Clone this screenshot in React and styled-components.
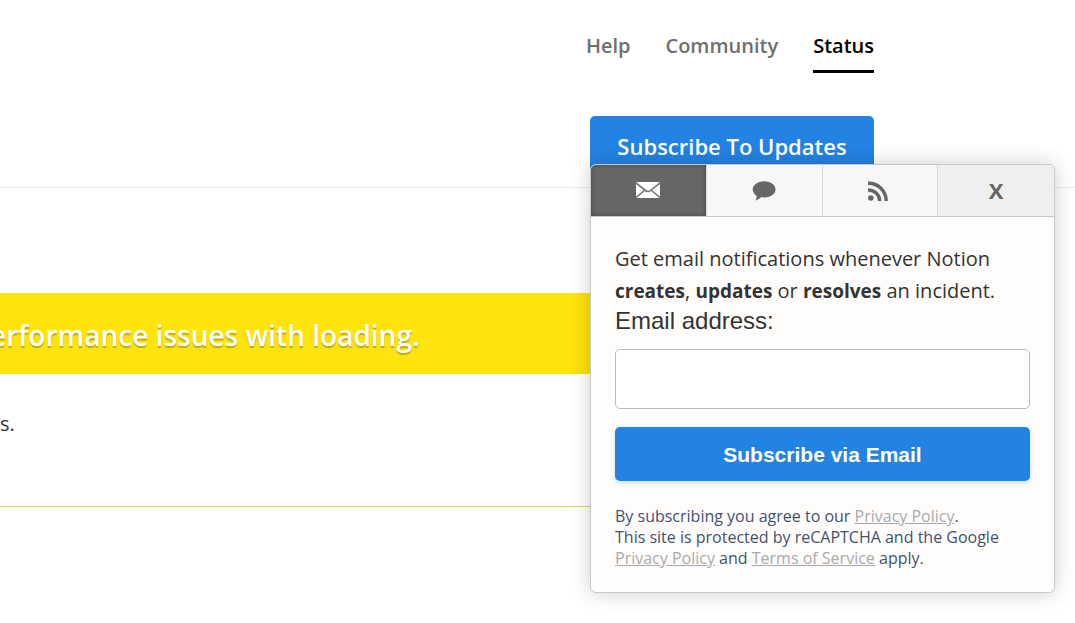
import React, { useState } from 'react';
import styled, { createGlobalStyle } from 'styled-components';

const GlobalStyle = createGlobalStyle`
  * {
    box-sizing: border-box;
  }
  body {
    margin: 0;
    background: #fff;
    color: #333;
    font-family: 'Open Sans', 'Noto Sans', sans-serif;
  }
`;

const Page = styled.div`
  min-height: 100vh;
  overflow: hidden;
`;

const Header = styled.header`
  display: flex;
  flex-direction: column;
  align-items: flex-end;
  height: 188px;
  padding-right: 201px;
  border-bottom: 1px solid #ececec;
`;

const Nav = styled.nav`
  display: flex;
  gap: 35px;
  padding-top: 21px;
`;

const NavLink = styled.a`
  height: 52px;
  border-bottom: 3px solid ${props => props.$active ? '#000' : 'transparent'};
  color: ${props => props.$active ? '#000' : '#6f6f6f'};
  font-size: 20px;
  font-weight: 600;
  line-height: 50px;
  text-decoration: none;
`;

const SubscribeArea = styled.div`
  position: relative;
  width: 284px;
  margin-top: 43px;
`;

const SubscribeButton = styled.button`
  width: 100%;
  height: 60px;
  border: none;
  border-radius: 5px;
  background: #2383e2;
  color: #fff;
  font-family: inherit;
  font-size: 22px;
  font-weight: 600;
  cursor: pointer;
`;

const Popup = styled.div`
  position: absolute;
  top: 48px;
  left: 0;
  z-index: 2;
  width: 465px;
  border: 1px solid #c8c8c8;
  border-radius: 6px;
  background: #fffdfc;
  box-shadow: 0 0 20px rgba(0, 0, 0, 0.2);
`;

const Tabs = styled.div`
  display: grid;
  grid-template-columns: repeat(4, 1fr);
  height: 52px;
  overflow: hidden;
  border-bottom: 1px solid #c8c8c8;
  border-radius: 5px 5px 0 0;
`;

const Tab = styled.button`
  display: flex;
  align-items: center;
  justify-content: center;
  padding: 0 0 2px;
  border: none;
  border-right: ${props => props.$plain ? 'none' : '1px solid #d8d8d8'};
  background: ${props => props.$active ? '#666' : props.$plain ? '#efefef' : '#f7f7f7'};
  box-shadow: ${props => props.$active ? 'inset 0 0 5px rgba(0, 0, 0, 0.3)' : 'none'};
  color: #666;
  font-family: inherit;
  font-size: 22px;
  font-weight: 700;
  cursor: pointer;
`;

const Form = styled.form`
  display: flex;
  flex-direction: column;
  padding: 26px 24px 23px;
`;

const Intro = styled.p`
  margin: 0;
  font-size: 20px;
  line-height: 32px;

  strong {
    font-size: 19px;
  }
`;

const Label = styled.label`
  font-family: 'Liberation Sans', Arial, sans-serif;
  font-size: 24px;
  line-height: 28px;
`;

const EmailInput = styled.input`
  height: 60px;
  margin-top: 14px;
  padding: 0 16px;
  border: 1px solid #bbb;
  border-radius: 5px;
  background: #fff;
  font-size: 20px;
`;

const SubmitButton = styled.button`
  height: 54px;
  margin-top: 18px;
  padding: 2px 0 0;
  border: none;
  border-radius: 5px;
  background: #2383e2;
  box-shadow: 0 2px 5px rgba(35, 131, 226, 0.25);
  color: #fff;
  font-family: 'Liberation Sans', Arial, sans-serif;
  font-size: 21px;
  font-weight: 700;
  cursor: pointer;
`;

const Terms = styled.p`
  margin: 25px 0 0;
  color: #42526e;
  font-size: 16px;
  line-height: 21px;
`;

const TermsLink = styled.a`
  color: #aaa;
  text-decoration: underline;
`;

const Incident = styled.section`
  margin: 105px 201px 0 0;
  border-bottom: 1px solid #e8d53c;
`;

const IncidentTitle = styled.h2`
  margin: 0;
  height: 81px;
  background: #ffe30c;
  color: #fff;
  font-size: 28px;
  font-weight: 600;
  line-height: 84px;
  white-space: nowrap;
  text-indent: -10px;
  text-shadow: 0 2px 1px rgba(0, 0, 0, 0.25);
`;

const IncidentText = styled.p`
  margin: 0;
  padding: 34px 0 66px;
  font-size: 20px;
  line-height: 32px;
`;

function MailIcon() {
  return (
    <svg width="24" height="16" viewBox="0 0 24 16" aria-hidden="true">
      <rect width="24" height="16" rx="1" fill="#fff" />
      <path d="M0 1 L9.5 8.5 Q12 10.5 14.5 8.5 L24 1 M0 15.5 L9 8 M24 15.5 L15 8" fill="none" stroke="#777" strokeWidth="1.6" />
    </svg>
  );
}

function ChatIcon() {
  return (
    <svg width="24" height="22" viewBox="0 -2 24 22" aria-hidden="true">
      <path d="M12.5 0.3 C18.9 0.3 23.5 4 23.5 8.3 C23.5 12.8 18.8 16.4 12.5 16.4 C11.3 16.4 10.3 16.3 9.3 16.1 C7.6 17.8 5.5 19.2 3 19.5 C4.3 18.2 4.800 16.500 4.6 15 C2.3 13.4 0.7 11 0.7 8.3 C0.7 4 6 0.3 12.5 0.3 Z" fill="#666" />
    </svg>
  );
}

function FeedIcon() {
  return (
    <svg width="24" height="22" viewBox="0 -2 24 22" aria-hidden="true">
      <circle cx="2.8" cy="17" r="2.8" fill="#666" />
      <path d="M0 2.3 A17.7 17.7 0 0 1 18.2 20 M0 9 A11.4 11.2 0 0 1 11.700 20" fill="none" stroke="#666" strokeWidth="3.4" />
    </svg>
  );
}

const TABS = [
  { id: 'email', label: 'Subscribe via email', content: <MailIcon /> },
  { id: 'slack', label: 'Subscribe via chat', content: <ChatIcon /> },
  { id: 'feed', label: 'Subscribe via feed', content: <FeedIcon /> },
];

function SubscribePopup({ onClose }) {
  const [email, setEmail] = useState('');

  return (
    <Popup>
      <Tabs>
        {TABS.map(tab => (
          <Tab key={tab.id} type="button" aria-label={tab.label} $active={tab.id === 'email'}>
            {tab.content}
          </Tab>
        ))}
        <Tab type="button" $plain onClick={onClose}>X</Tab>
      </Tabs>
      <Form onSubmit={e => e.preventDefault()}>
        <Intro>
          Get email notifications whenever Notion <strong>creates</strong>, <strong>updates</strong> or <strong>resolves</strong> an incident.
        </Intro>
        <Label htmlFor="email">Email address:</Label>
        <EmailInput id="email" type="email" value={email} onChange={e => setEmail(e.target.value)} />
        <SubmitButton type="submit">Subscribe via Email</SubmitButton>
        <Terms>
          By subscribing you agree to our <TermsLink href="#privacy">Privacy Policy</TermsLink>.<br />
          This site is protected by reCAPTCHA and the Google{' '}
          <TermsLink href="#google-privacy">Privacy Policy</TermsLink> and{' '}
          <TermsLink href="#google-terms">Terms of Service</TermsLink> apply.
        </Terms>
      </Form>
    </Popup>
  );
}

export default function App() {
  const [open, setOpen] = useState(true);

  return (
    <Page>
      <GlobalStyle />
      <Header>
        <Nav>
          <NavLink href="#help">Help</NavLink>
          <NavLink href="#community">Community</NavLink>
          <NavLink href="#status" $active>Status</NavLink>
        </Nav>
        <SubscribeArea>
          <SubscribeButton type="button" onClick={() => setOpen(!open)}>Subscribe To Updates</SubscribeButton>
          {open && <SubscribePopup onClose={() => setOpen(false)} />}
        </SubscribeArea>
      </Header>
      <main>
        <Incident>
          <IncidentTitle>erformance issues with loading.</IncidentTitle>
          <IncidentText>s.</IncidentText>
        </Incident>
      </main>
    </Page>
  );
}
